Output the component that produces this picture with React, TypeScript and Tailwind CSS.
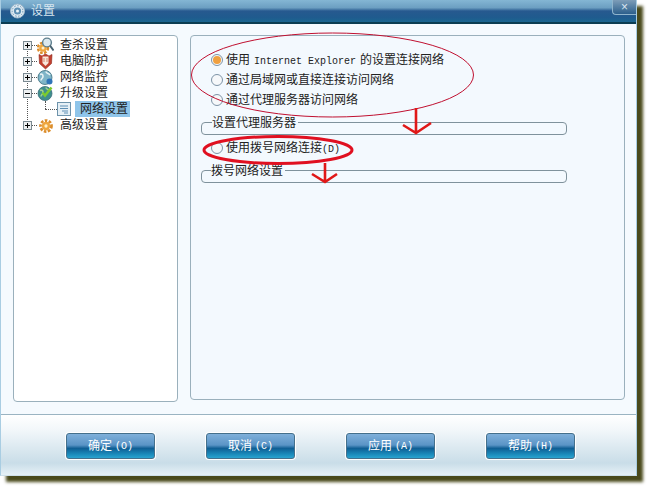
const CJK = "font-['Liberation_Sans','Noto_Sans_CJK_SC',sans-serif]";
const MONO = "font-['Liberation_Mono',monospace] text-[10px] whitespace-pre";

function Gear({ x, y, r }: { x: number; y: number; r: number }) {
  return (
    <g>
      <circle cx={x} cy={y} r={r} fill="none" stroke="#dc8e2c" strokeWidth={r * 0.5} strokeDasharray="2.6 1.4" />
      <circle cx={x} cy={y} r={r * 0.76} fill="#efa63e" />
      <circle cx={x} cy={y} r={r * 0.3} fill="#fff0c8" />
    </g>
  );
}

function ScanIcon() {
  return (
    <svg width="17" height="17" viewBox="0 0 17 17">
      <Gear x={6} y={11} r={5} />
      <circle cx={10} cy={5.5} r={4.4} fill="#dbe8ee" stroke="#5e7f8e" strokeWidth="1.4" />
      <path d="M13 8.5 16.5 13.5" stroke="#46606e" strokeWidth="2" />
    </svg>
  );
}

function GuardIcon() {
  return (
    <svg width="17" height="17" viewBox="0 0 17 17">
      <path d="M2 1.5 5 3 8.5 1 12 3 15 1.5 14.5 10.5 8.5 16 2.5 10.5Z" fill="#c2402f" stroke="#8c2418" strokeWidth="0.6" />
      <path d="M5.5 3.5h6V10L8.5 13 5.5 10Z" fill="#f8e8dc" />
      <path d="M7 5v4M10 5v4" stroke="#d98a70" />
    </svg>
  );
}

function GlobeIcon({ check }: { check?: boolean }) {
  return (
    <svg width="17" height="17" viewBox="0 0 17 17">
      <circle cx="8" cy="8.5" r="7" fill={check ? "#3f8f8c" : "#7fb5c8"} stroke="#3b6d7c" strokeWidth="0.8" />
      <path d="M3 5.5c2-1 3 0 3 2s-2 2-2 4M9 2.5c0 2 3 2 4 3.5" stroke={check ? "#9fd08f" : "#e8f2f4"} strokeWidth="1.6" fill="none" />
      {check ? (
        <path d="M5.5 7.5 8 10.5 14.5 2.5" stroke="#7ccb2e" strokeWidth="2.4" fill="none" />
      ) : (
        <circle cx="12.5" cy="12.5" r="3" fill="#2f74b8" />
      )}
    </svg>
  );
}

function GearIcon() {
  return (
    <svg width="17" height="17" viewBox="0 0 17 17">
      <Gear x={9} y={9} r={5.5} />
    </svg>
  );
}

function DocIcon() {
  return (
    <svg width="14" height="14" viewBox="0 0 14 14">
      <rect x="0.5" y="0.5" width="13" height="13" fill="#e6f0f6" stroke="#6d93ab" />
      <path d="M3 4h8M3 6.5h8M5 9h6M7 11h4" stroke="#5e8fb4" />
    </svg>
  );
}

function Expander({ open }: { open?: boolean }) {
  return (
    <span className="relative flex h-[9px] w-[9px] shrink-0 items-center justify-center border border-[#7b8a92] bg-[#eceff0]">
      <span className="h-px w-[5px] bg-black" />
      {!open && <span className="absolute h-[5px] w-px bg-black" />}
    </span>
  );
}

const treeRows = [
  { label: "查杀设置", icon: <ScanIcon /> },
  { label: "电脑防护", icon: <GuardIcon /> },
  { label: "网络监控", icon: <GlobeIcon /> },
  { label: "升级设置", icon: <GlobeIcon check />, open: true },
];

function TreeRow({ label, icon, open }: { label: string; icon: React.ReactNode; open?: boolean }) {
  return (
    <div className="flex h-4 items-center">
      <Expander open={open} />
      <span className="w-[5px] border-t border-dotted border-[#555]" />
      <span className="flex w-[23px] shrink-0">{icon}</span>
      <span className="text-[12px] text-[#222]">{label}</span>
    </div>
  );
}

function Radio({ checked }: { checked?: boolean }) {
  return (
    <span className="flex h-3 w-3 shrink-0 items-center justify-center rounded-full border border-[#7d93a6] bg-[#f6f8fa]">
      {checked && <span className="h-2 w-2 rounded-full bg-[#f0a040]" />}
    </span>
  );
}

function GroupBox({ label, left }: { label: string; left: string }) {
  return (
    <div className="relative h-[13px] w-[366px] rounded-[4px] border border-[#7f929c]">
      <span className={`absolute -top-[7px] bg-[#f3f9fe] pr-0.5 text-[12px] leading-[14px] text-[#222] ${left}`}>
        {label}
      </span>
    </div>
  );
}

function DialogButton({ label, hotkey }: { label: string; hotkey: string }) {
  return (
    <button className="flex h-[26px] w-[89px] items-center justify-center gap-[3px] rounded-[3px] border border-[#44708c] bg-[linear-gradient(#7fb0da_0%,#5a94c6_46%,#0f5f94_60%,#1b8cbc_85%,#2aa3cf_100%)] text-[12px] text-white shadow-[0_0_0_1px_#ffffff]">
      {label}
      <span className={MONO}>{hotkey}</span>
    </button>
  );
}

export default function App() {
  return (
    <div className={`relative h-[488px] w-[649px] overflow-hidden bg-white ${CJK}`}>
      <div className="flex h-[476px] w-[637px] flex-col border-x border-b border-x-[#a9cde2] border-b-[#cfe0ea] bg-[#f5fafe] shadow-[6px_6px_3px_#4a4a1c]">
        <div className="relative flex h-6 shrink-0 items-center gap-[6px] border-b-2 border-[#0b3d52] bg-[linear-gradient(#84b6d4_0%,#6c9fc2_35%,#27598f_50%,#1f5b8e_80%,#1b6690_100%)] pl-[9px]">
          <svg width="15" height="16" viewBox="0 0 15 16">
            <circle cx="7.5" cy="8" r="7" fill="#dfeaf2" stroke="#9fb9cc" />
            <circle cx="7.5" cy="8" r="3.6" fill="#5d8fb4" />
            <circle cx="7.5" cy="8" r="1.5" fill="#e8f2f8" />
            <circle cx="7.5" cy="8" r="5.3" fill="none" stroke="#6c97b8" strokeDasharray="1.5 1.5" />
          </svg>
          <span className="text-[12px] text-[#d7e6f0]">设置</span>
          <span className="absolute right-0 top-0 flex h-[15px] w-6 items-center justify-center rounded-bl-[4px] border-b border-l border-[#8fb4cc] bg-[linear-gradient(#7d9db8,#2c5f8c)] text-[12px] leading-none text-[#d9e6f0]">
            ×
          </span>
        </div>

        <div className="flex h-[378px] shrink-0 items-start gap-3 pl-3 pt-[11px]">
          <div className="relative h-[367px] w-[165px] rounded-[4px] border border-[#9ab0bc] bg-white pl-[9px] pt-[1px]">
            <span className="absolute left-[13px] top-[8px] h-[80px] border-l border-dotted border-[#555]" />
            <div className="relative flex flex-col">
              {treeRows.map((row) => (
                <TreeRow key={row.label} {...row} />
              ))}
              <div className="relative flex h-4 items-center pl-[22px]">
                <span className="absolute left-[22px] top-0 h-2 border-l border-dotted border-[#555]" />
                <span className="w-3 border-t border-dotted border-[#555]" />
                <span className="flex w-[18px] shrink-0">
                  <DocIcon />
                </span>
                <span className="flex h-4 items-center bg-[#8fc5ea] pl-[5px] pr-[2px] text-[12px] text-[#222]">
                  网络设置
                </span>
              </div>
              <TreeRow label="高级设置" icon={<GearIcon />} />
            </div>
          </div>

          <div className="h-[365px] w-[435px] rounded-[4px] border border-[#9ab0bc] bg-[#f3f9fe] pl-[10px] pt-4 text-[12px] text-[#222]">
            <div className="flex flex-col gap-[4px] pl-[10px]">
              <label className="flex h-4 items-center gap-[3px]">
                <Radio checked />
                <span>
                  使用<span className={`${MONO} ml-1 mr-[4px]`}>Internet Explorer</span>的设置连接网络
                </span>
              </label>
              <label className="flex h-4 items-center gap-[3px]">
                <Radio />
                <span>通过局域网或直接连接访问网络</span>
              </label>
              <label className="flex h-4 items-center gap-[3px]">
                <Radio />
                <span>通过代理服务器访问网络</span>
              </label>
            </div>
            <div className="mt-[14px]">
              <GroupBox label="设置代理服务器" left="left-[10px]" />
            </div>
            <label className="mt-[5px] flex h-4 items-center gap-[3px] pl-[10px]">
              <Radio />
              <span>
                使用拨号网络连接<span className={MONO}>(D)</span>
              </span>
            </label>
            <div className="mt-[14px]">
              <GroupBox label="拨号网络设置" left="left-[9px]" />
            </div>
          </div>
        </div>

        <div className="mt-3 flex flex-1 items-start gap-[51px] border-t border-[#9ab4c2] bg-[linear-gradient(#ffffff_0%,#f2f7fa_25%,#c9dde8_80%,#e6f1f7_100%)] pl-[65px] pt-[18px]">
          <DialogButton label="确定" hotkey="(O)" />
          <DialogButton label="取消" hotkey="(C)" />
          <DialogButton label="应用" hotkey="(A)" />
          <DialogButton label="帮助" hotkey="(H)" />
        </div>
      </div>

      {/* hand drawn marks on top of the screenshot */}
      <svg className="pointer-events-none absolute inset-0" width="649" height="488" viewBox="0 0 649 488" fill="none">
        <ellipse cx="332.5" cy="75" rx="141" ry="42" stroke="#c01030" strokeWidth="1" />
        <ellipse cx="278" cy="150" rx="74" ry="13.5" stroke="#e01020" strokeWidth="3" />
        <path d="M416 108V133M403 125 416 133 431 123" stroke="#e01818" strokeWidth="2.6" />
        <path d="M325 163V182M312 174 325 182 337 174" stroke="#e01818" strokeWidth="2.6" />
      </svg>
    </div>
  );
}
